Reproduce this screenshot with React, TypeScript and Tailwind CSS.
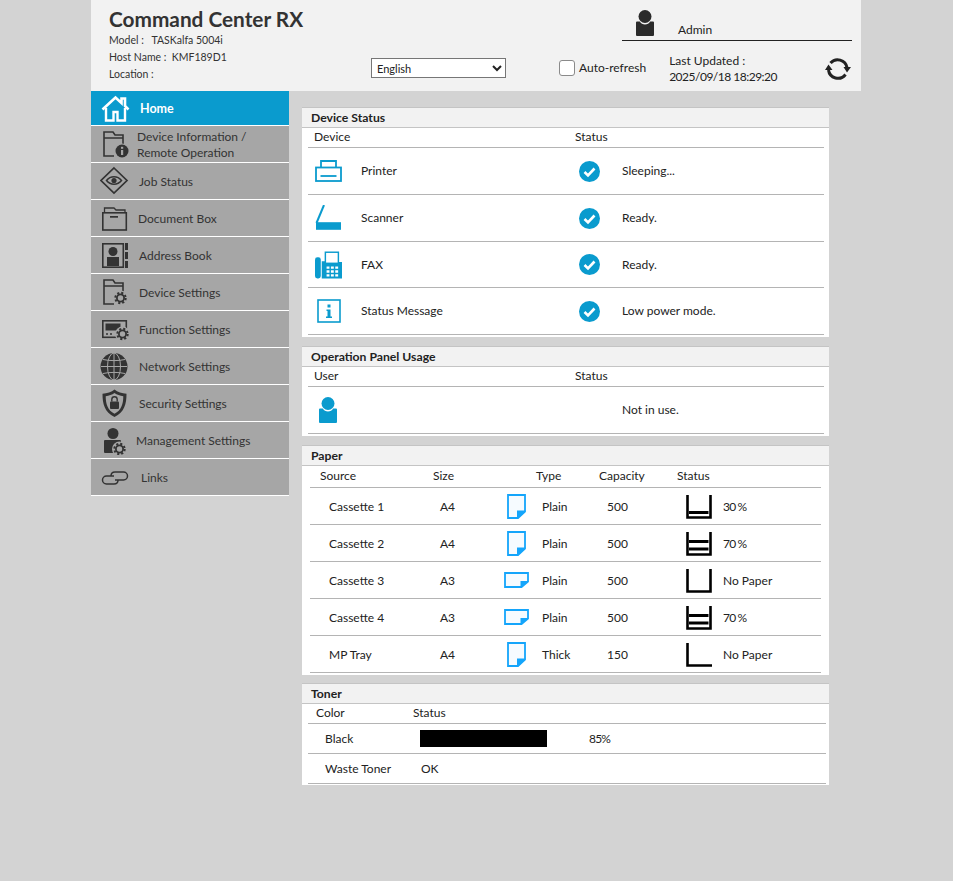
import type { ReactNode } from "react";

const ink = "#333333";
const blue = "#0a9bce";
const paperBlue = "#14a5fb";

function Gear({ cx, cy }: { cx: number; cy: number }) {
  return (
    <g fill="none">
      <circle cx={cx} cy={cy} r={7.5} fill="#a6a6a6" />
      <circle cx={cx} cy={cy} r={3.6} stroke={ink} strokeWidth={1.8} />
      <circle cx={cx} cy={cy} r={5.2} stroke={ink} strokeWidth={2} strokeDasharray="2.1 2" />
    </g>
  );
}

function Folder() {
  return <path d="M14 27H4V3h9l2 3h8v9M4 9h19" fill="none" stroke={ink} strokeWidth={1.6} />;
}

function Icon30({ children }: { children: ReactNode }) {
  return (
    <svg width={30} height={30} viewBox="0 0 30 30" className="shrink-0">
      {children}
    </svg>
  );
}

const menu: { label: ReactNode; gap: string; icon: ReactNode }[] = [
  {
    label: (
      <>
        Device Information /<br />
        Remote Operation
      </>
    ),
    gap: "ml-[7px]",
    icon: (
      <>
        <Folder />
        <circle cx={22} cy={22} r={7.5} fill="#a6a6a6" />
        <circle cx={22} cy={22} r={6.5} fill={ink} />
        <rect x={21} y={21} width={2.2} height={5} fill="#a6a6a6" />
        <rect x={21} y={17.8} width={2.2} height={2} fill="#a6a6a6" />
      </>
    ),
  },
  {
    label: "Job Status",
    gap: "ml-[9px]",
    icon: (
      <>
        <path d="M14 2l13 12.5L14 27 1 14.5z" fill="none" stroke={ink} strokeWidth={1.7} />
        <path d="M6.5 14.5c4-5 11-5 15 0-4 5-11 5-15 0z" fill="none" stroke={ink} strokeWidth={1.5} />
        <circle cx={14} cy={14.5} r={2.6} fill={ink} />
      </>
    ),
  },
  {
    label: "Document Box",
    gap: "ml-[8px]",
    icon: (
      <>
        <rect x={2.8} y={9.8} width={23.5} height={17.2} fill="none" stroke={ink} strokeWidth={1.6} />
        <path d="M4.5 9V5h9.5l2 2h9v2" fill="none" stroke={ink} strokeWidth={1.3} />
        <rect x={10} y={13} width={8} height={1.7} fill={ink} />
      </>
    ),
  },
  {
    label: "Address Book",
    gap: "ml-[9px]",
    icon: (
      <>
        <rect x={2.8} y={3.8} width={20.5} height={23.4} fill="none" stroke={ink} strokeWidth={1.6} />
        <circle cx={13} cy={11.5} r={4.5} fill={ink} />
        <path d="M7 17h12v9H7z" fill={ink} />
        <path d="M25 3h3v7h-3zM25 12h3v7h-3zM25 21h3v7h-3z" fill={ink} />
      </>
    ),
  },
  {
    label: "Device Settings",
    gap: "ml-[9px]",
    icon: (
      <>
        <Folder />
        <Gear cx={20.5} cy={21} />
      </>
    ),
  },
  {
    label: "Function Settings",
    gap: "ml-[9px]",
    icon: (
      <>
        <rect x={2.8} y={6.8} width={23.5} height={16.5} fill="none" stroke={ink} strokeWidth={1.6} />
        <rect x={5.5} y={9.5} width={15} height={7} fill={ink} />
        <path d="M6 20h2M10 20h2" stroke={ink} strokeWidth={1.6} />
        <Gear cx={22.5} cy={20} />
      </>
    ),
  },
  {
    label: "Network Settings",
    gap: "ml-[9px]",
    icon: (
      <>
        <circle cx={14} cy={15.5} r={13.5} fill={ink} />
        <g fill="none" stroke="#a6a6a6" strokeWidth={1}>
          <ellipse cx={14} cy={15.5} rx={6.5} ry={13.5} />
          <path d="M14 2v27M1 15.5h26M3 8.5c7 1.5 15 1.5 22 0M3 22.5c7-1.5 15-1.5 22 0" />
        </g>
      </>
    ),
  },
  {
    label: "Security Settings",
    gap: "ml-[9px]",
    icon: (
      <>
        <path d="M14.5 1.5c3 2.5 7.5 4 12 4.2 0 10-2 18.5-12 23.3-10-4.800-12-13.300-12-23.300 4.500-.2 9-1.700 12-4.200z" fill={ink} />
        <path d="M14.5 5c2.400 1.700 5.500 2.800 8.800 3.200 0 7.500-2 14-8.800 17.600C7.700 22.200 5.700 15.700 5.700 8.200 9 7.800 12.100 6.700 14.500 5z" fill="#a6a6a6" />
        <rect x={10} y={13.5} width={9} height={7.5} rx={1} fill={ink} />
        <path d="M11.800 13.500v-2a2.700 2.700 0 0 1 5.400 0v2" fill="none" stroke={ink} strokeWidth={1.4} />
      </>
    ),
  },
  {
    label: "Management Settings",
    gap: "ml-[6px]",
    icon: (
      <>
        <circle cx={13} cy={8.5} r={5.5} fill={ink} />
        <path d="M5 15h15a1 1 0 0 1 1 1v12H5a1 1 0 0 1-1-1V16a1 1 0 0 1 1-1z" fill={ink} />
        <Gear cx={19.5} cy={24} />
      </>
    ),
  },
  {
    label: "Links",
    gap: "ml-[11px]",
    icon: (
      <g fill="none" stroke={ink} strokeWidth={1.5}>
        <path d="M14 14H6.500a4 4 0 0 0 0 8H14c2.500 0 4-1.500 4-4" />
        <path d="M15 18h8.500a4 4 0 0 0 0-8H15c-2.500 0-4 1.500-4 4" />
      </g>
    ),
  },
];

function RefreshIcon() {
  return (
    <svg width={26} height={24} viewBox="0 0 26 24">
      <g fill="none" stroke="#222" strokeWidth={3}>
        <path d="M5.500 6A9.500 9.500 0 0 1 22 10.500" />
        <path d="M20.500 17.500A9.500 9.500 0 0 1 3.500 13" />
      </g>
      <path d="M18.500 10h7.500L22 15.500zM0 13h7.500L3.500 7.500z" fill="#222" />
    </svg>
  );
}

function UserGlyph({ color, className }: { color: string; className?: string }) {
  return (
    <svg width={18} height={26} viewBox="0 0 18 26" className={className}>
      <circle cx={9} cy={6.5} r={6.5} fill={color} />
      <path d="M1 11.500h2.800c1 2 3 3 5.200 3s4.200-1 5.200-3H17a1 1 0 0 1 1 1V25a1 1 0 0 1-1 1H1a1 1 0 0 1-1-1V12.500a1 1 0 0 1 1-1z" fill={color} />
    </svg>
  );
}

function CheckBadge() {
  return (
    <svg width={21} height={21} viewBox="0 0 21 21">
      <circle cx={10.5} cy={10.5} r={10.5} fill={blue} />
      <path d="M5.500 11l3.500 3.500 6.500-7" fill="none" stroke="#fff" strokeWidth={2.6} />
    </svg>
  );
}

const PrinterIcon = (
  <svg width={27} height={22} viewBox="0 0 27 22">
    <g fill="none" stroke={blue} strokeWidth={1.8}>
      <path d="M6 8V1h15v7" />
      <rect x={1} y={7.5} width={25} height={13.5} />
      <path d="M5.500 16h16" />
    </g>
  </svg>
);

const ScannerIcon = (
  <svg width={27} height={27} viewBox="0 0 27 27">
    <path d="M1.500 18L9 0" fill="none" stroke={blue} strokeWidth={2} />
    <path d="M1 17.200H26V24.800H1z" fill={blue} />
  </svg>
);

const FaxIcon = (
  <svg width={28} height={28} viewBox="0 0 28 28">
    <rect x={0} y={6} width={6} height={22} rx={2.5} fill={blue} />
    <path d="M7 10h3V0h15v11h3v17H7z" fill={blue} />
    <rect x={11.5} y={1.5} width={12} height={10} fill="#fff" />
    <path d="M12 15.500h3v2.500h-3zM16.500 15.500h3v2.500h-3zM21 15.500h3v2.500h-3zM12 19.500h3v2.500h-3zM16.500 19.500h3v2.500h-3zM21 19.500h3v2.500h-3zM12 23.500h3V26h-3zM16.500 23.500h3V26h-3zM21 23.500h3V26h-3z" fill="#fff" />
  </svg>
);

const InfoIcon = (
  <svg width={24} height={24} viewBox="0 0 24 24">
    <rect x={1} y={1} width={22} height={22} fill="none" stroke={blue} strokeWidth={1.6} />
    <path d="M10.500 5.500h3v3h-3zM9.500 10.500h4v7h1.500V19H9v-1.500h1.500v-5.500h-1z" fill={blue} />
  </svg>
);

function PaperPortrait() {
  return (
    <svg width={19} height={25} viewBox="0 0 19 25" className="mb-[2px]">
      <path d="M1 1h17v16.500L11 24H1z" fill="#f6fbff" stroke={paperBlue} strokeWidth={1.8} />
      <path d="M10 16.500h8.500L10 24.500z" fill={paperBlue} />
    </svg>
  );
}

function PaperLandscape() {
  return (
    <svg width={25} height={16} viewBox="0 0 25 16" className="mb-[2px]">
      <path d="M1 1h23v8.500L17.500 15H1z" fill="#f6fbff" stroke={paperBlue} strokeWidth={1.8} />
      <path d="M16.500 9h8L16.500 15.500z" fill={paperBlue} />
    </svg>
  );
}

function Tray({ level }: { level: "low" | "mid" | "none" | "mp" }) {
  return (
    <svg width={26} height={24} viewBox="0 0 26 24">
      <path
        d={level === "mp" ? "M1.500 0V22.500H26" : "M1.500 0V22.500H24.500V0"}
        fill="none"
        stroke="#000"
        strokeWidth={2.6}
      />
      {level === "low" && <rect x={3} y={16} width={19.5} height={3} fill="#000" />}
      {level === "mid" && (
        <>
          <rect x={3} y={8} width={19.5} height={3} fill="#000" />
          <rect x={3} y={15.5} width={19.5} height={3} fill="#000" />
        </>
      )}
    </svg>
  );
}

function Panel({ title, pb, children }: { title: string; pb: string; children: ReactNode }) {
  return (
    <section className={`w-[527px] bg-white ${pb}`}>
      <h2 className="h-[21px] border-y border-[#c4c4c4] bg-[#f2f2f2] pl-[9px] text-[12.2px] leading-[19px] font-bold text-[#222]">
        {title}
      </h2>
      {children}
    </section>
  );
}

const deviceRows = [
  { icon: PrinterIcon, name: "Printer", status: "Sleeping...", h: "h-[47px]" },
  { icon: ScannerIcon, name: "Scanner", status: "Ready.", h: "h-[47px]" },
  { icon: FaxIcon, name: "FAX", status: "Ready.", h: "h-[46px]" },
  { icon: InfoIcon, name: "Status Message", status: "Low power mode.", h: "h-[47px]" },
];

const paperRows = [
  { source: "Cassette 1", size: "A4", land: false, type: "Plain", cap: "500", level: "low", text: "30 %", track: "tracking-[-0.8px]" },
  { source: "Cassette 2", size: "A4", land: false, type: "Plain", cap: "500", level: "mid", text: "70 %", track: "tracking-[-0.8px]" },
  { source: "Cassette 3", size: "A3", land: true, type: "Plain", cap: "500", level: "none", text: "No Paper", track: "" },
  { source: "Cassette 4", size: "A3", land: true, type: "Plain", cap: "500", level: "mid", text: "70 %", track: "tracking-[-0.8px]" },
  { source: "MP Tray", size: "A4", land: false, type: "Thick", cap: "150", level: "mp", text: "No Paper", track: "" },
] as const;

export default function App() {
  return (
    <div className="min-h-[881px] bg-[#d3d3d3] pl-[91px] font-['Lato',sans-serif] text-[12px] text-[#222]">
      <header className="flex h-[91px] w-[770px] bg-[#f2f2f2]">
        <div className="w-[280px] pl-[18px]">
          <h1 className="pt-[5px] text-[20.8px] leading-[27px] font-bold text-[#333]">Command Center RX</h1>
          <div className="text-[10.5px] leading-[17px] text-[#333]">
            <p>Model :&nbsp;&nbsp; TASKalfa 5004i</p>
            <p>Host Name :&nbsp; KMF189D1</p>
            <p>Location :</p>
          </div>
        </div>
        <div className="flex-1">
          <div className="flex h-[41px] justify-end pr-[9px]">
            <div className="flex w-[230px] items-end border-b border-[#222] pb-[1px] pl-[14px]">
              <UserGlyph color="#2b2b2b" className="mb-[3px]" />
              <span className="ml-[24px] text-[12px]">Admin</span>
            </div>
          </div>
          <div className="mt-[17px] flex items-start">
            <select className="h-[20px] w-[135px] border border-[#767676] bg-white pl-[1px] text-[11px]">
              <option>English</option>
            </select>
            <label className="mt-[2px] ml-[53px] flex items-center gap-[4px] text-[12px] leading-[16px]">
              <input type="checkbox" className="h-[16px] w-[16px] appearance-none rounded-[3px] border border-[#8a8a8a] bg-white" />
              Auto-refresh
            </label>
            <div className="-mt-[5px] ml-[23px] w-[107px] text-[12px] leading-[16px]">
              <p>Last Updated :</p>
              <p className="tracking-[-0.5px] whitespace-nowrap">2025/09/18 18:29:20</p>
            </div>
            <div className="-mt-[1px] ml-[49px]">
              <RefreshIcon />
            </div>
          </div>
        </div>
      </header>

      <div className="flex">
        <nav className="w-[198px]">
          <a className="flex h-[35px] items-center border-b border-white bg-[#0a9bce] pl-[10px] text-[12.5px] font-bold text-white">
            <svg width={29} height={27} viewBox="0 0 29 27" className="shrink-0">
              <path d="M1.500 14.500L14.500 2.500l6 5.500V3.500h3.500v7.500l3.500 3.500" fill="none" stroke="#fff" strokeWidth={2.6} />
              <path d="M5 13v12.500h7.500V17h4v8.500H24V13" fill="none" stroke="#fff" strokeWidth={2.4} />
            </svg>
            <span className="mt-[2px] ml-[10px]">Home</span>
          </a>
          {menu.map((m, i) => (
            <a key={i} className="flex h-[37px] items-center border-b border-white bg-[#a6a6a6] pl-[9px] text-[12px] leading-[16px] text-[#333]">
              <Icon30>{m.icon}</Icon30>
              <span className={`mt-[2px] ${m.gap}`}>{m.label}</span>
            </a>
          ))}
        </nav>

        <main className="ml-[13px] flex flex-col pt-[16px]">
          <Panel title="Device Status" pb="pb-[2px]">
            <div className="mx-[6px] w-[516px]">
              <div className="flex h-[20px] items-center border-b border-[#b4b4b4] pb-[2px] pl-[6px]">
                <span className="w-[261px]">Device</span>
                <span>Status</span>
              </div>
              {deviceRows.map((r) => (
                <div key={r.name} className={`flex items-center border-b border-[#b4b4b4] ${r.h}`}>
                  <span className="mr-[19px] ml-[7px] flex w-[27px] justify-center">{r.icon}</span>
                  <span className="w-[218px]">{r.name}</span>
                  <span className="w-[43px]">
                    <CheckBadge />
                  </span>
                  <span>{r.status}</span>
                </div>
              ))}
            </div>
          </Panel>

          <div className="mt-[9px]">
            <Panel title="Operation Panel Usage" pb="pb-[2px]">
              <div className="mx-[6px] w-[516px]">
                <div className="flex h-[20px] items-center border-b border-[#b4b4b4] pb-[2px] pl-[6px]">
                  <span className="w-[261px]">User</span>
                  <span>Status</span>
                </div>
                <div className="flex h-[47px] items-center border-b border-[#b4b4b4] pl-[11px]">
                  <UserGlyph color={blue} />
                  <span className="ml-[285px]">Not in use.</span>
                </div>
              </div>
            </Panel>
          </div>

          <div className="mt-[9px]">
            <Panel title="Paper" pb="pb-[2px]">
              <div className="mx-[8px] w-[511px]">
                <div className="flex h-[22px] items-center border-b border-[#b4b4b4] pb-[2px] pl-[10px]">
                  <span className="w-[113px]">Source</span>
                  <span className="w-[103px]">Size</span>
                  <span className="w-[63px]">Type</span>
                  <span className="w-[78px]">Capacity</span>
                  <span>Status</span>
                </div>
                {paperRows.map((r) => (
                  <div key={r.source} className="flex h-[37px] items-center border-b border-[#b4b4b4] pt-[2px] pl-[19px]">
                    <span className="w-[111px]">{r.source}</span>
                    <span className="w-[63px]">{r.size}</span>
                    <span className="flex w-[39px] justify-center pr-[12px]">
                      {r.land ? <PaperLandscape /> : <PaperPortrait />}
                    </span>
                    <span className="w-[65px]">{r.type}</span>
                    <span className="w-[79px]">{r.cap}</span>
                    <span className="flex w-[37px]">
                      <Tray level={r.level} />
                    </span>
                    <span className={r.track}>{r.text}</span>
                  </div>
                ))}
              </div>
            </Panel>
          </div>

          <div className="mt-[8px]">
            <Panel title="Toner" pb="pb-[1px]">
              <div className="mx-[6px] w-[518px]">
                <div className="flex h-[20px] items-center border-b border-[#b4b4b4] pb-[2px] pl-[8px]">
                  <span className="w-[97px]">Color</span>
                  <span>Status</span>
                </div>
                <div className="flex h-[30px] items-center border-b border-[#b4b4b4] pl-[17px]">
                  <span className="w-[95px]">Black</span>
                  <span className="h-[17px] w-[127px] bg-black" />
                  <span className="ml-[42px] tracking-[-0.8px]">85%</span>
                </div>
                <div className="flex h-[30px] items-center border-b border-[#b4b4b4] pl-[17px]">
                  <span className="w-[96px]">Waste Toner</span>
                  <span>OK</span>
                </div>
              </div>
            </Panel>
          </div>
        </main>
      </div>
    </div>
  );
}
